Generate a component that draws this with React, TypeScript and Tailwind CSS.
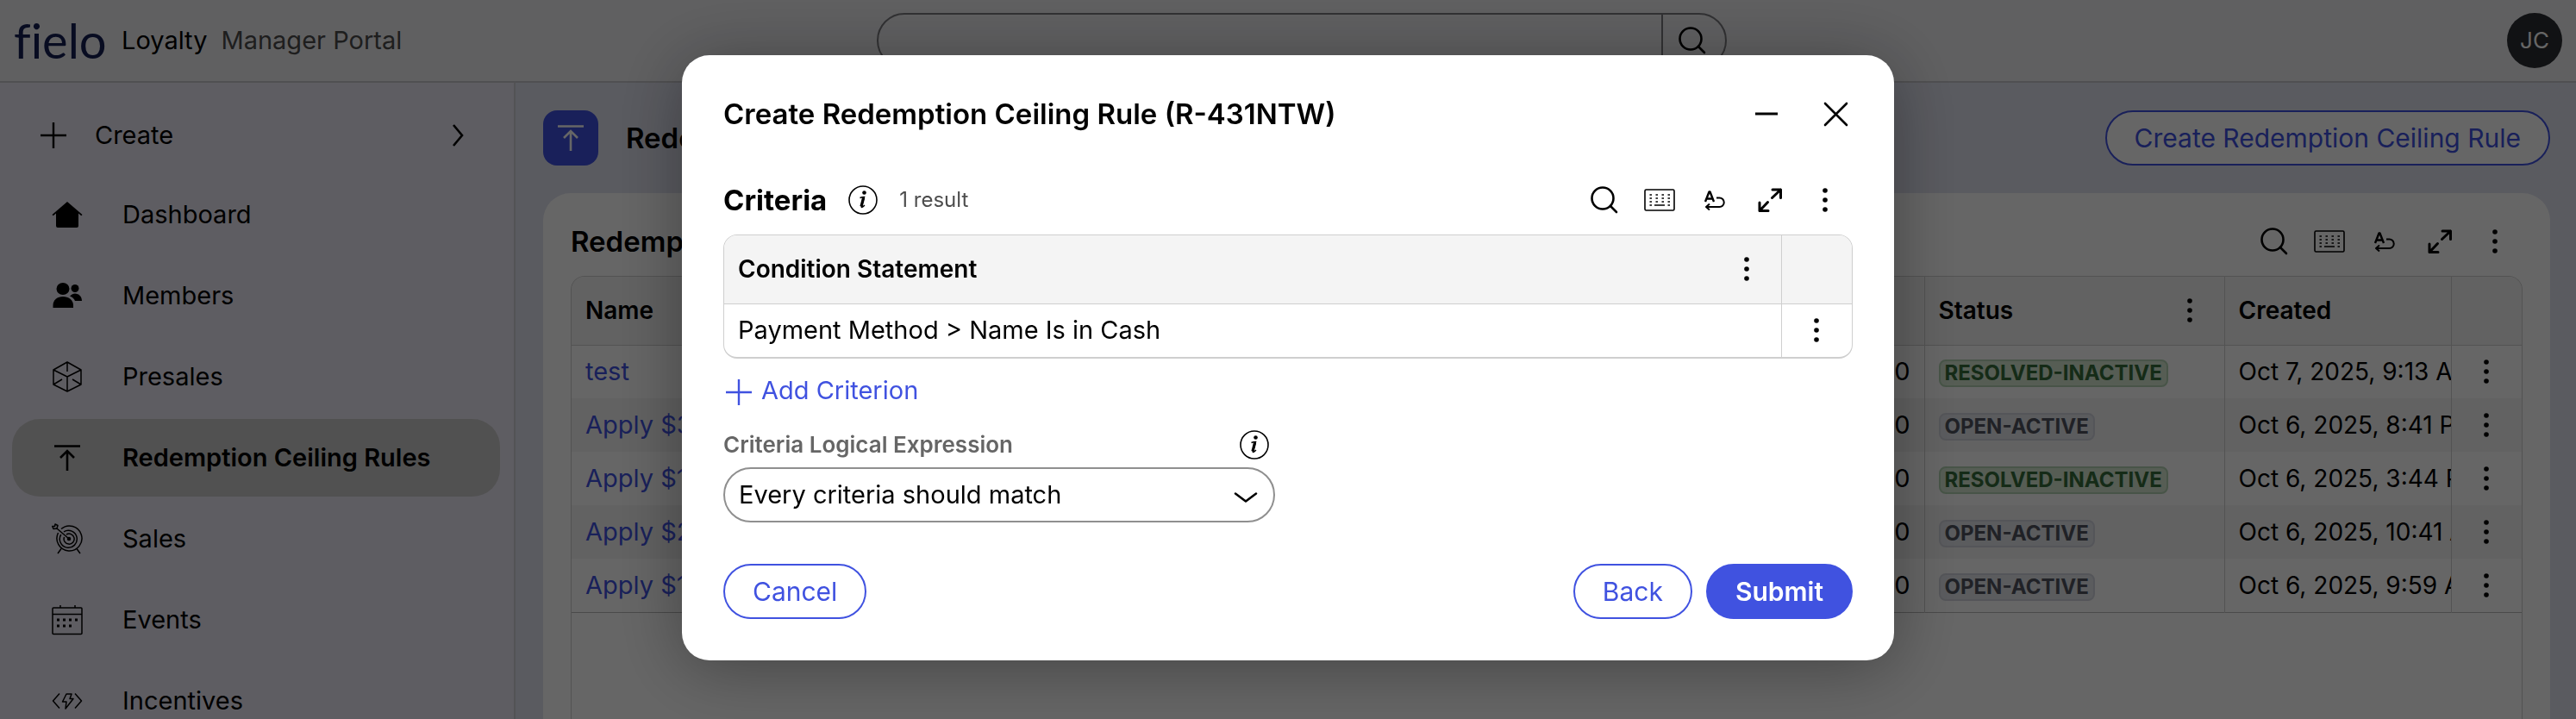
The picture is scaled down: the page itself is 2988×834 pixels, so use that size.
import React, { useState } from "react";

type IconProps = { className?: string };

const rules = [
	{ name: "test", value: "0", status: "RESOLVED-INACTIVE", created: "Oct 7, 2025, 9:13 AM" },
	{ name: "Apply $30", value: "0", status: "OPEN-ACTIVE", created: "Oct 6, 2025, 8:41 PM" },
	{ name: "Apply $10", value: "0", status: "RESOLVED-INACTIVE", created: "Oct 6, 2025, 3:44 PM" },
	{ name: "Apply $20", value: "0", status: "OPEN-ACTIVE", created: "Oct 6, 2025, 10:41 AM" },
	{ name: "Apply $15", value: "0", status: "OPEN-ACTIVE", created: "Oct 6, 2025, 9:59 AM" },
];

function SearchIcon({ className }: IconProps) {
	return (
		<svg className={className} viewBox="0 0 36 36" fill="none" stroke="currentColor" strokeWidth="2.6" strokeLinecap="round">
			<circle cx="16" cy="16" r="12.5" />
			<path d="M25 25l7 7" />
		</svg>
	);
}

function KeyboardIcon({ className }: IconProps) {
	return (
		<svg className={className} viewBox="0 0 36 36" fill="none" stroke="currentColor" strokeWidth="1.6">
			<rect x="1" y="6" width="34" height="24" rx="1.5" />
			<path strokeWidth="1.4" d="M6.500 12h2.500M13.500 12h2.500M20.500 12h2.500M27.500 12h2.500M6.500 16h2.500M13.500 16h2.500M20.500 16h2.500M27.500 16h2.500M6.500 20h2.500M13.500 20h2.500M20.500 20h2.500M27.500 20h2.500M6.500 24h2.500M12 24h12M27.500 24h2.500" />
		</svg>
	);
}

function WrapIcon({ className }: IconProps) {
	return (
		<svg className={className} viewBox="0 0 36 36" fill="none" stroke="currentColor" strokeWidth="2.4" strokeLinejoin="round">
			<path d="M7 20L11.500 8.500h1L17 20M8.500 16.500h7" />
			<path d="M20 15.500h3.500a5 5 0 0 1 0 10.500H8M12 22.500l-4 3.500 4 3.500" strokeWidth="2" />
		</svg>
	);
}

function ExpandIcon({ className }: IconProps) {
	return (
		<svg className={className} viewBox="0 0 36 36" fill="none" stroke="currentColor" strokeWidth="3" strokeLinecap="round" strokeLinejoin="round">
			<path d="M20.500 15.500L30.500 6M21 6h9.500v9.500M15.500 20.500L6 30.500M6 21v9.500h10" />
		</svg>
	);
}

function DotsIcon({ className }: IconProps) {
	return (
		<svg className={className} viewBox="0 0 36 36" fill="currentColor">
			<circle cx="18" cy="7" r="2.800" />
			<circle cx="18" cy="18" r="2.800" />
			<circle cx="18" cy="29" r="2.800" />
		</svg>
	);
}

function InfoIcon({ className }: IconProps) {
	return (
		<svg className={className} viewBox="0 0 36 36" fill="none" stroke="currentColor">
			<circle cx="18" cy="18" r="16" strokeWidth="1.6" />
			<circle cx="19.500" cy="9.500" r="2.300" fill="currentColor" stroke="none" />
			<path d="M14.500 15.500c1.500-.6 3-.9 5-1l-3.200 11c-.3 1.400.9 1.300 3.600-1.500" strokeWidth="1.500" />
			<path d="M18.600 15.500l-2.600 10" strokeWidth="3.200" />
		</svg>
	);
}

function PlusIcon({ className }: IconProps) {
	return (
		<svg className={className} viewBox="0 0 32 32" fill="none" stroke="currentColor" strokeWidth="2.400">
			<path d="M16 1v30M1 16h30" />
		</svg>
	);
}

function CeilingIcon({ className }: IconProps) {
	return (
		<svg className={className} viewBox="0 0 36 36" fill="none" stroke="currentColor" strokeWidth="2.600">
			<path d="M3 4.500h30M18 33V10.500M10 18l8-8 8 8" />
		</svg>
	);
}

function HomeIcon({ className }: IconProps) {
	return (
		<svg className={className} viewBox="0 0 36 36" fill="currentColor">
			<path d="M18 3L0.500 18l1.200 1.300L5 16.600V31a2 2 0 0 0 2 2h22a2 2 0 0 0 2-2V16.600l3.300 2.700 1.200-1.300z" />
		</svg>
	);
}

function MembersIcon({ className }: IconProps) {
	return (
		<svg className={className} viewBox="0 0 36 36" fill="currentColor">
			<ellipse cx="13" cy="10" rx="7.500" ry="7" />
			<path d="M1.500 32v-3c0-6 5-10 11.500-10s12 4 12 10v3z" />
			<circle cx="27" cy="9.500" r="4.500" />
			<path d="M21 18.500c2-2 4-3 6-3 4.500 0 8 3.500 8 8.500h-8c-1-2.500-3-4.500-6-5.500z" />
		</svg>
	);
}

function PresalesIcon({ className }: IconProps) {
	return (
		<svg className={className} viewBox="0 0 36 36" fill="none" stroke="currentColor" strokeWidth="1.500" strokeLinejoin="round">
			<path d="M18 1l16 9v17l-16 8-16-8V10zM2 10l16 8 16-8M18 18v17M18 1v11M2 27l10-6M34 27l-10-6" />
		</svg>
	);
}

function SalesIcon({ className }: IconProps) {
	return (
		<svg className={className} viewBox="0 0 36 36" fill="none" stroke="currentColor" strokeWidth="1.500" strokeLinejoin="round">
			<path d="M11 6.500A14.500 14.500 0 1 1 7.500 11M14 9.800A10 10 0 1 1 10.800 13M17 13A6 6 0 1 1 14.500 16" />
			<circle cx="20" cy="18" r="1.500" fill="currentColor" />
			<path d="M20 18L6 6M6 6L2 6.500.8 3.500 3.500 3.500 4 1 7 2.500zM11 29.500L7 35M29 29.500l4 5.500" />
		</svg>
	);
}

function EventsIcon({ className }: IconProps) {
	return (
		<svg className={className} viewBox="0 0 36 36" fill="none" stroke="currentColor" strokeWidth="1.500">
			<rect x="1" y="4" width="34" height="30.500" rx="1" />
			<path d="M1 11.500h34M10 1v3M27 1v3" />
			<path d="M6 18h24M6 25h18" strokeWidth="3" strokeDasharray="3 4" />
		</svg>
	);
}

function IncentivesIcon({ className }: IconProps) {
	return (
		<svg className={className} viewBox="0 0 36 36" fill="none" stroke="currentColor" strokeWidth="1.500" strokeLinejoin="round">
			<path d="M9 9.500L1.500 18 9 26.500M27 9.500l7.500 8.500-7.500 8.500M17 10h6l-2 5.500h4L16 27l1-8h-4.500z" />
		</svg>
	);
}

const menu = [
	{ label: "Dashboard", Icon: HomeIcon },
	{ label: "Members", Icon: MembersIcon },
	{ label: "Presales", Icon: PresalesIcon },
	{ label: "Redemption Ceiling Rules", Icon: CeilingIcon, active: true },
	{ label: "Sales", Icon: SalesIcon },
	{ label: "Events", Icon: EventsIcon },
	{ label: "Incentives", Icon: IncentivesIcon },
];

const tools = [
	{ label: "Search", Icon: SearchIcon },
	{ label: "Columns", Icon: KeyboardIcon },
	{ label: "Wrap text", Icon: WrapIcon },
	{ label: "Expand", Icon: ExpandIcon },
	{ label: "More actions", Icon: DotsIcon },
];

const btnStyle = {
	outline: `h-16 rounded-full border-2 border-[#4052e0] bg-white px-8 text-[30px] text-[#4052e0]`,
	solid: `h-16 rounded-full border-2 border-[#4052e0] bg-[#4052e0] px-8 text-[30px] font-semibold text-white`,
};

function Toolbar() {
	return (
		<div className="flex">
			{tools.map(({ label, Icon }) => (
				<button key={label} aria-label={label} className="flex size-16 items-center justify-center">
					<Icon className="size-9" />
				</button>
			))}
		</div>
	);
}

function DotsButton() {
	return (
		<button aria-label="Row actions" className="flex size-9 items-center justify-center">
			<DotsIcon className="size-9" />
		</button>
	);
}

function Header() {
	return (
		<header className="flex h-24 shrink-0 items-center justify-between border-b-2 border-[#c8c8cc] bg-[#f0f0f3] px-4">
			<div className="flex flex-1 items-center">
				<span className="w-[125px] font-[Lato] text-[56px] leading-[64px] text-[#141e54] [font-variant-ligatures:none]">fielo</span>
				<span>Loyalty</span>
				<span className="pl-4 text-[#4d4d4d]">Manager Portal</span>
			</div>
			<div className="ml-8 flex h-16 w-1/3 max-w-[987px] overflow-hidden rounded-full border-2 border-[#7c7c80]">
				<input aria-label="Search" className="min-w-0 flex-1 bg-transparent px-8 outline-none" />
				<button aria-label="Search" className="flex w-[74px] items-center border-l-2 border-[#7c7c80] pl-4">
					<SearchIcon className="size-9" />
				</button>
			</div>
			<div className="flex flex-1 justify-end">
				<button className="size-16 rounded-full bg-[#2b2d32] text-[26px] text-white">JC</button>
			</div>
		</header>
	);
}

function Sidebar() {
	return (
		<nav className="w-[598px] shrink-0 overflow-hidden border-r-2 border-[#cfcfd4] bg-[#ebe8f4] pt-4 pr-4 pl-[14px]">
			<button className="flex h-[90px] w-full items-center pr-10 pl-8">
				<PlusIcon className="size-8" />
				<span className="flex-1 pl-8 text-left">Create</span>
				<svg className="h-7 w-4" viewBox="0 0 16 28" fill="none" stroke="currentColor" strokeWidth="2.600">
					<path d="M2 2l10 12L2 26" />
				</svg>
			</button>
			<ul className="flex flex-col gap-1 pt-0.5">
				{menu.map(({ label, Icon, active }) => (
					<li key={label}>
						<a
							href="#"
							className={
								active
									? "flex h-[90px] items-center gap-[46px] rounded-[32px] bg-[#cbcbcb] pl-[46px] font-semibold"
									: "flex h-[90px] items-center gap-[46px] rounded-[32px] pl-[46px]"
							}>
							<Icon className="size-9 shrink-0" />
							{label}
						</a>
					</li>
				))}
			</ul>
		</nav>
	);
}

function StatusBadge({ status }: { status: string }) {
	return (
		<span
			className={
				status === "OPEN-ACTIVE"
					? "inline-block rounded-lg border-2 border-[#d3d5df] bg-[#e4e6ec] px-[5px] text-2xl/7 font-bold text-[#50545f]"
					: "inline-block rounded-lg border-2 border-[#b3d3b3] bg-[#d6e8d3] px-[5px] text-2xl/7 font-bold text-[#356b3a]"
			}>
			{status}
		</span>
	);
}

function RulesTable() {
	return (
		<div className="flex-1 overflow-hidden rounded-t-2xl border border-b-0 border-[#cfcfcf]">
			<table className="w-full table-fixed">
				<colgroup>
					<col />
					<col className="w-[348px]" />
					<col className="w-[348px]" />
					<col className="w-[263px]" />
					<col className="w-[82px]" />
				</colgroup>
				<thead className="bg-[#f4f4f4] text-left text-[28px]">
					<tr className="h-[79px] border-b border-[#cfcfcf]">
						<th className="px-4 font-semibold">Name</th>
						<th className="px-4 font-semibold" />
						<th className="border-l border-[#cfcfcf] px-4 font-semibold">
							<div className="flex items-center justify-between pr-1.5">
								Status
								<DotsButton />
							</div>
						</th>
						<th className="border-l border-[#cfcfcf] px-4 font-semibold">Created</th>
						<th className="border-l border-[#cfcfcf]" />
					</tr>
				</thead>
				<tbody>
					{rules.map((rule) => (
						<tr key={rule.created} className="h-[62px] border-[#b8b8b8] last:border-b even:bg-[#f4f4f4]">
							<td className="px-4">
								<a href="#" className="text-[#4052e0]">{rule.name}</a>
							</td>
							<td className="px-4 text-right">{rule.value}</td>
							<td className="border-l border-[#cfcfcf] px-4">
								<StatusBadge status={rule.status} />
							</td>
							<td className="overflow-hidden border-l border-[#cfcfcf] pl-4 text-[28px] whitespace-nowrap">{rule.created}</td>
							<td className="border-l border-[#cfcfcf] pl-[22px]">
								<DotsButton />
							</td>
						</tr>
					))}
				</tbody>
			</table>
		</div>
	);
}

function CriteriaModal() {
	const [expression, setExpression] = useState<string>("every");

	return (
		<div className="fixed inset-0 flex items-start justify-center bg-black/60 pt-16">
			<div
				role="dialog"
				aria-labelledby="modal-title"
				className="w-full max-w-[1406px] rounded-[32px] bg-white p-12 shadow-[0_8px_80px_rgba(0,0,0,0.35)]">
				<div className="flex h-10 items-center justify-between">
					<h2 id="modal-title" className="text-[33px] font-semibold">
						Create Redemption Ceiling Rule (R-431NTW)
					</h2>
					<div className="flex gap-11 pr-0.5">
						<button aria-label="Minimize">
							<svg className="size-9" viewBox="0 0 36 36" stroke="currentColor" strokeWidth="3">
								<path d="M5 18h26" />
							</svg>
						</button>
						<button aria-label="Close">
							<svg className="size-9" viewBox="0 0 36 36" stroke="currentColor" strokeWidth="2.600" strokeLinecap="round">
								<path d="M6 6l25 25M31 6L6 31" />
							</svg>
						</button>
					</div>
				</div>

				<div className="flex items-center justify-between pt-12">
					<div className="flex items-center gap-6">
						<h3 className="text-[33px] font-bold">Criteria</h3>
						<InfoIcon className="size-9" />
						<span className="text-2xl text-[#4d4d4d]">1 result</span>
					</div>
					<Toolbar />
				</div>

				<div className="mt-2 overflow-hidden rounded-2xl border border-b-2 border-[#cfcfcf]">
					<table className="w-full table-fixed">
						<colgroup>
							<col />
							<col className="w-[82px]" />
						</colgroup>
						<thead className="bg-[#f4f4f4] text-left text-[28px]">
							<tr className="h-[79px] border-b border-[#cfcfcf]">
								<th className="px-4 font-semibold">
									<div className="flex items-center justify-between pr-1.5">
										Condition Statement
										<DotsButton />
									</div>
								</th>
								<th className="border-l border-[#cfcfcf]" />
							</tr>
						</thead>
						<tbody>
							<tr className="h-[62px]">
								<td className="px-4">Payment Method &gt; Name Is in Cash</td>
								<td className="border-l border-[#cfcfcf] pl-[22px]">
									<DotsButton />
								</td>
							</tr>
						</tbody>
					</table>
				</div>

				<button className="flex h-[74px] items-center gap-2 text-[#4052e0]">
					<PlusIcon className="size-9 pt-1" />
					Add Criterion
				</button>

				<div className="w-[640px]">
					<div className="flex h-[52px] items-center justify-between pr-1">
						<label htmlFor="expression" className="text-[26px] font-semibold text-[#666666]">
							Criteria Logical Expression
						</label>
						<InfoIcon className="mr-0.5 size-9" />
					</div>
					<div className="relative">
						<select
							id="expression"
							value={expression}
							onChange={(e) => setExpression(e.target.value)}
							className="h-16 w-full appearance-none rounded-full border-2 border-[#8f8f8f] bg-white px-4">
							<option value="every">Every criteria should match</option>
							<option value="any">Any criteria should match</option>
						</select>
						<svg className="pointer-events-none absolute top-7 right-5 h-4 w-7" viewBox="0 0 28 16" fill="none" stroke="currentColor" strokeWidth="2.600" strokeLinecap="round" strokeLinejoin="round">
							<path d="M2 2.500l12 9 12-9" />
						</svg>
					</div>
				</div>

				<div className="flex justify-between pt-12">
					<button className={btnStyle.outline}>Cancel</button>
					<div className="flex gap-4">
						<button className={btnStyle.outline}>Back</button>
						<button className={btnStyle.solid}>Submit</button>
					</div>
				</div>
			</div>
		</div>
	);
}

export default function App() {
	return (
		<div className="flex h-screen flex-col overflow-hidden font-[Inter,sans-serif] text-[29px] leading-10 text-black">
			<Header />
			<div className="flex min-h-0 flex-1">
				<Sidebar />
				<main className="flex min-w-0 flex-1 flex-col bg-[#e1e3f0] px-8 pt-8 pr-[30px]">
					<div className="flex items-center justify-between">
						<div className="flex items-center gap-8">
							<div className="flex size-16 items-center justify-center rounded-2xl bg-[#4052e0] text-white">
								<CeilingIcon className="size-9" />
							</div>
							<h1 className="text-[33px] font-semibold">Redemption Ceiling Rules</h1>
						</div>
						<button className={btnStyle.outline}>Create Redemption Ceiling Rule</button>
					</div>
					<section className="mt-8 flex flex-1 flex-col rounded-t-[32px] bg-white px-8 pt-6">
						<div className="mb-2 flex items-center justify-between">
							<h2 className="text-[33px] font-semibold">Redemption Ceiling Rules</h2>
							<Toolbar />
						</div>
						<RulesTable />
					</section>
				</main>
			</div>
			<CriteriaModal />
		</div>
	);
}
